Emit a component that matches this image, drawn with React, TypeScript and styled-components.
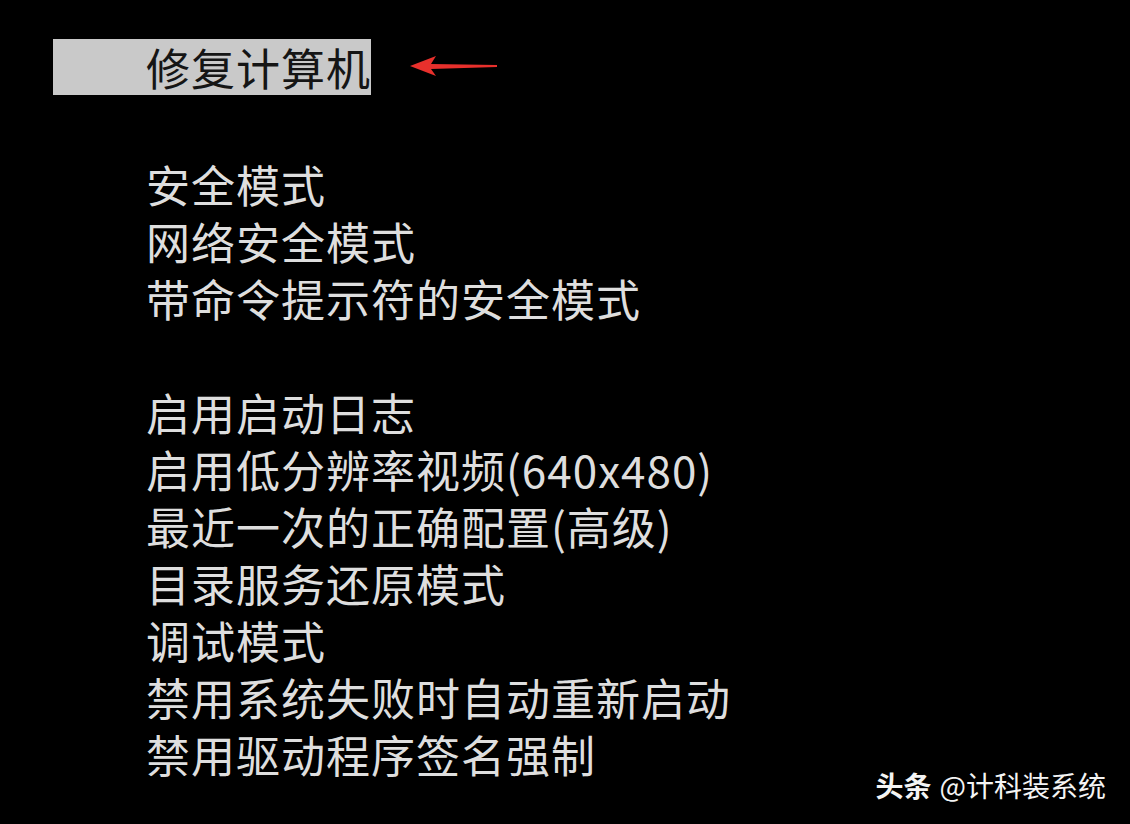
import styled, { createGlobalStyle } from 'styled-components'

const GlobalStyle = createGlobalStyle`
  html, body {
    margin: 0;
    padding: 0;
    background: #000;
  }
`

const Screen = styled.div`
  position: relative;
  width: 1130px;
  height: 824px;
  overflow: hidden;
  background: #000;
  font-family: "Noto Sans CJK SC", "Noto Sans", sans-serif;
`

const HeaderRow = styled.div`
  display: flex;
  align-items: center;
  padding-top: 39px;
  padding-left: 53px;
`

const Selected = styled.div`
  width: 318px;
  height: 56px;
  box-sizing: border-box;
  padding-left: 93px;
  background: #c9c9c9;
  color: #151515;
  font-size: 44px;
  line-height: 56px;
  letter-spacing: 1px;
  white-space: nowrap;
`

const Arrow = styled.svg`
  margin-left: 38px;
  margin-top: -2px;
`

const Menu = styled.div`
  padding-top: 61px;
  padding-left: 146px;
`

const Group = styled.div`
  & + & {
    margin-top: 57px;
  }
`

const Item = styled.div`
  color: #dedede;
  font-size: 44px;
  line-height: 57px;
  height: 57px;
  letter-spacing: 1px;
  white-space: nowrap;
`

const Watermark = styled.div`
  position: absolute;
  right: 24px;
  bottom: 22px;
  color: #f4f4f4;
  font-size: 28px;
  line-height: 34px;
  white-space: nowrap;
`

const Brand = styled.span`
  font-weight: 700;
  margin-right: 8px;
`

const groups: string[][] = [
  ['安全模式', '网络安全模式', '带命令提示符的安全模式'],
  [
    '启用启动日志',
    '启用低分辨率视频(640x480)',
    '最近一次的正确配置(高级)',
    '目录服务还原模式',
    '调试模式',
    '禁用系统失败时自动重新启动',
    '禁用驱动程序签名强制',
  ],
]

const App = () => {
  return (
    <>
      <GlobalStyle />
      <Screen>
        <HeaderRow>
          <Selected>修复计算机</Selected>
          <Arrow width="90" height="26" viewBox="0 0 90 26">
            <path d="M1 13 L27 3 L22 11 L88 12 L88 14 L22 16 L27 23 Z" fill="#e8302c" />
          </Arrow>
        </HeaderRow>
        <Menu>
          {groups.map((items, gi) => (
            <Group key={gi}>
              {items.map((item, i) => (
                <Item key={i}>{item}</Item>
              ))}
            </Group>
          ))}
        </Menu>
        <Watermark>
          <Brand>头条</Brand>@计科装系统
        </Watermark>
      </Screen>
    </>
  )
}

export default App
